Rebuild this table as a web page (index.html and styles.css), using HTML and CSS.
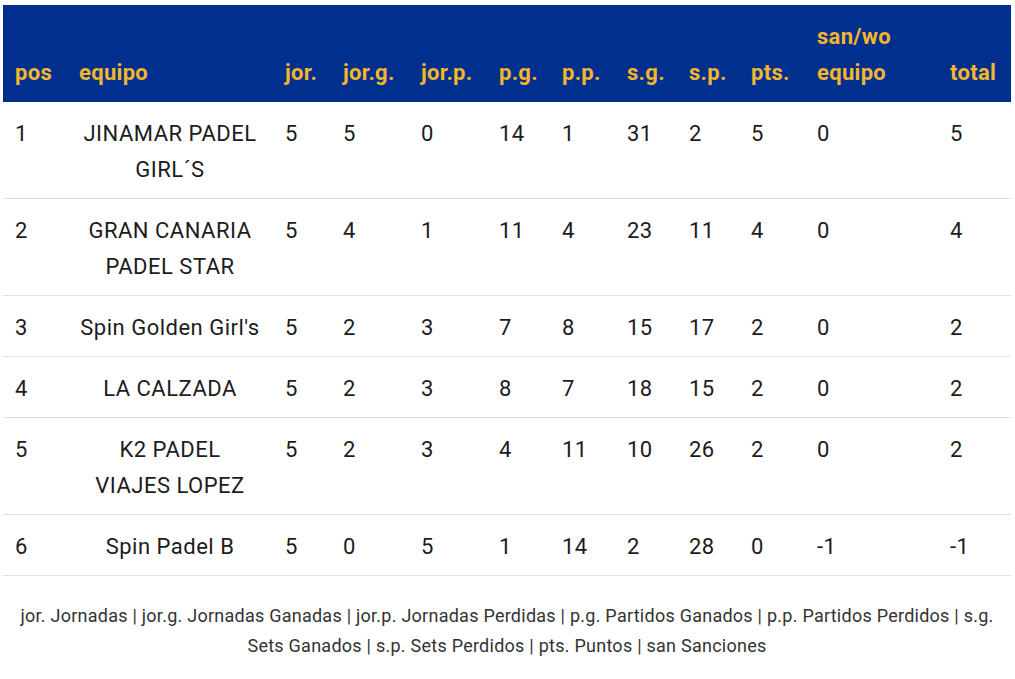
FILE: index.html
```html
<!DOCTYPE html>
<html lang="es">
<head>
<meta charset="utf-8">
<title>Clasificación</title>
<link rel="stylesheet" href="styles.css">
</head>
<body>
<div class="wrap">
<table class="standings">
<colgroup>
<col class="c-pos"><col class="c-team"><col class="c-jor"><col class="c-jorg"><col class="c-jorp"><col class="c-pg"><col class="c-pp"><col class="c-sg"><col class="c-sp"><col class="c-pts"><col class="c-san"><col class="c-total">
</colgroup>
<thead>
<tr>
<th>pos</th><th>equipo</th><th>jor.</th><th>jor.g.</th><th>jor.p.</th><th>p.g.</th><th>p.p.</th><th>s.g.</th><th>s.p.</th><th>pts.</th><th>san/wo<br>equipo</th><th>total</th>
</tr>
</thead>
<tbody>
<tr><td>1</td><td class="team">JINAMAR PADEL GIRL´S</td><td>5</td><td>5</td><td>0</td><td>14</td><td>1</td><td>31</td><td>2</td><td>5</td><td>0</td><td>5</td></tr>
<tr><td>2</td><td class="team">GRAN CANARIA PADEL STAR</td><td>5</td><td>4</td><td>1</td><td>11</td><td>4</td><td>23</td><td>11</td><td>4</td><td>0</td><td>4</td></tr>
<tr><td>3</td><td class="team">Spin Golden Girl's</td><td>5</td><td>2</td><td>3</td><td>7</td><td>8</td><td>15</td><td>17</td><td>2</td><td>0</td><td>2</td></tr>
<tr><td>4</td><td class="team">LA CALZADA</td><td>5</td><td>2</td><td>3</td><td>8</td><td>7</td><td>18</td><td>15</td><td>2</td><td>0</td><td>2</td></tr>
<tr><td>5</td><td class="team">K2 PADEL VIAJES LOPEZ</td><td>5</td><td>2</td><td>3</td><td>4</td><td>11</td><td>10</td><td>26</td><td>2</td><td>0</td><td>2</td></tr>
<tr><td>6</td><td class="team">Spin Padel B</td><td>5</td><td>0</td><td>5</td><td>1</td><td>14</td><td>2</td><td>28</td><td>0</td><td>-1</td><td>-1</td></tr>
</tbody>
</table>
<p class="legend">jor. Jornadas | jor.g. Jornadas Ganadas | jor.p. Jornadas Perdidas | p.g. Partidos Ganados | p.p. Partidos Perdidos | s.g. Sets Ganados | s.p. Sets Perdidos | pts. Puntos | san Sanciones</p>
</div>
</body>
</html>
```

FILE: styles.css
```css
html, body {
  margin: 0;
  padding: 0;
  background: #ffffff;
}
body {
  font-family: "Roboto", "Liberation Sans", sans-serif;
  color: #1c1c1c;
}
.wrap {
  padding: 5px 4px 0 3px;
}
.standings {
  width: 1008px;
  border-collapse: collapse;
  table-layout: fixed;
}
.c-pos { width: 64px; }
.c-team { width: 206px; }
.c-jor { width: 58px; }
.c-jorg { width: 78px; }
.c-jorp { width: 78px; }
.c-pg { width: 63px; }
.c-pp { width: 65px; }
.c-sg { width: 62px; }
.c-sp { width: 62px; }
.c-pts { width: 66px; }
.c-san { width: 133px; }
.c-total { width: 73px; }

.standings thead th {
  background: #002f8e;
  color: #f4b62d;
  font-weight: 700;
  font-size: 22px;
  line-height: 36px;
  text-align: left;
  vertical-align: bottom;
  padding: 14px 12px 11px;
  letter-spacing: 0.3px;
}
.standings td {
  font-size: 22px;
  line-height: 36px;
  padding: 14px 12px 10px;
  vertical-align: top;
  text-align: left;
  border-bottom: 1px solid #e0e0e0;
  letter-spacing: 0.5px;
}
.standings td.team {
  text-align: center;
}
.legend {
  margin: 25px 0 0;
  padding: 0 12px;
  text-align: center;
  font-size: 18px;
  line-height: 30px;
  letter-spacing: 0.25px;
  color: #333333;
}
```
